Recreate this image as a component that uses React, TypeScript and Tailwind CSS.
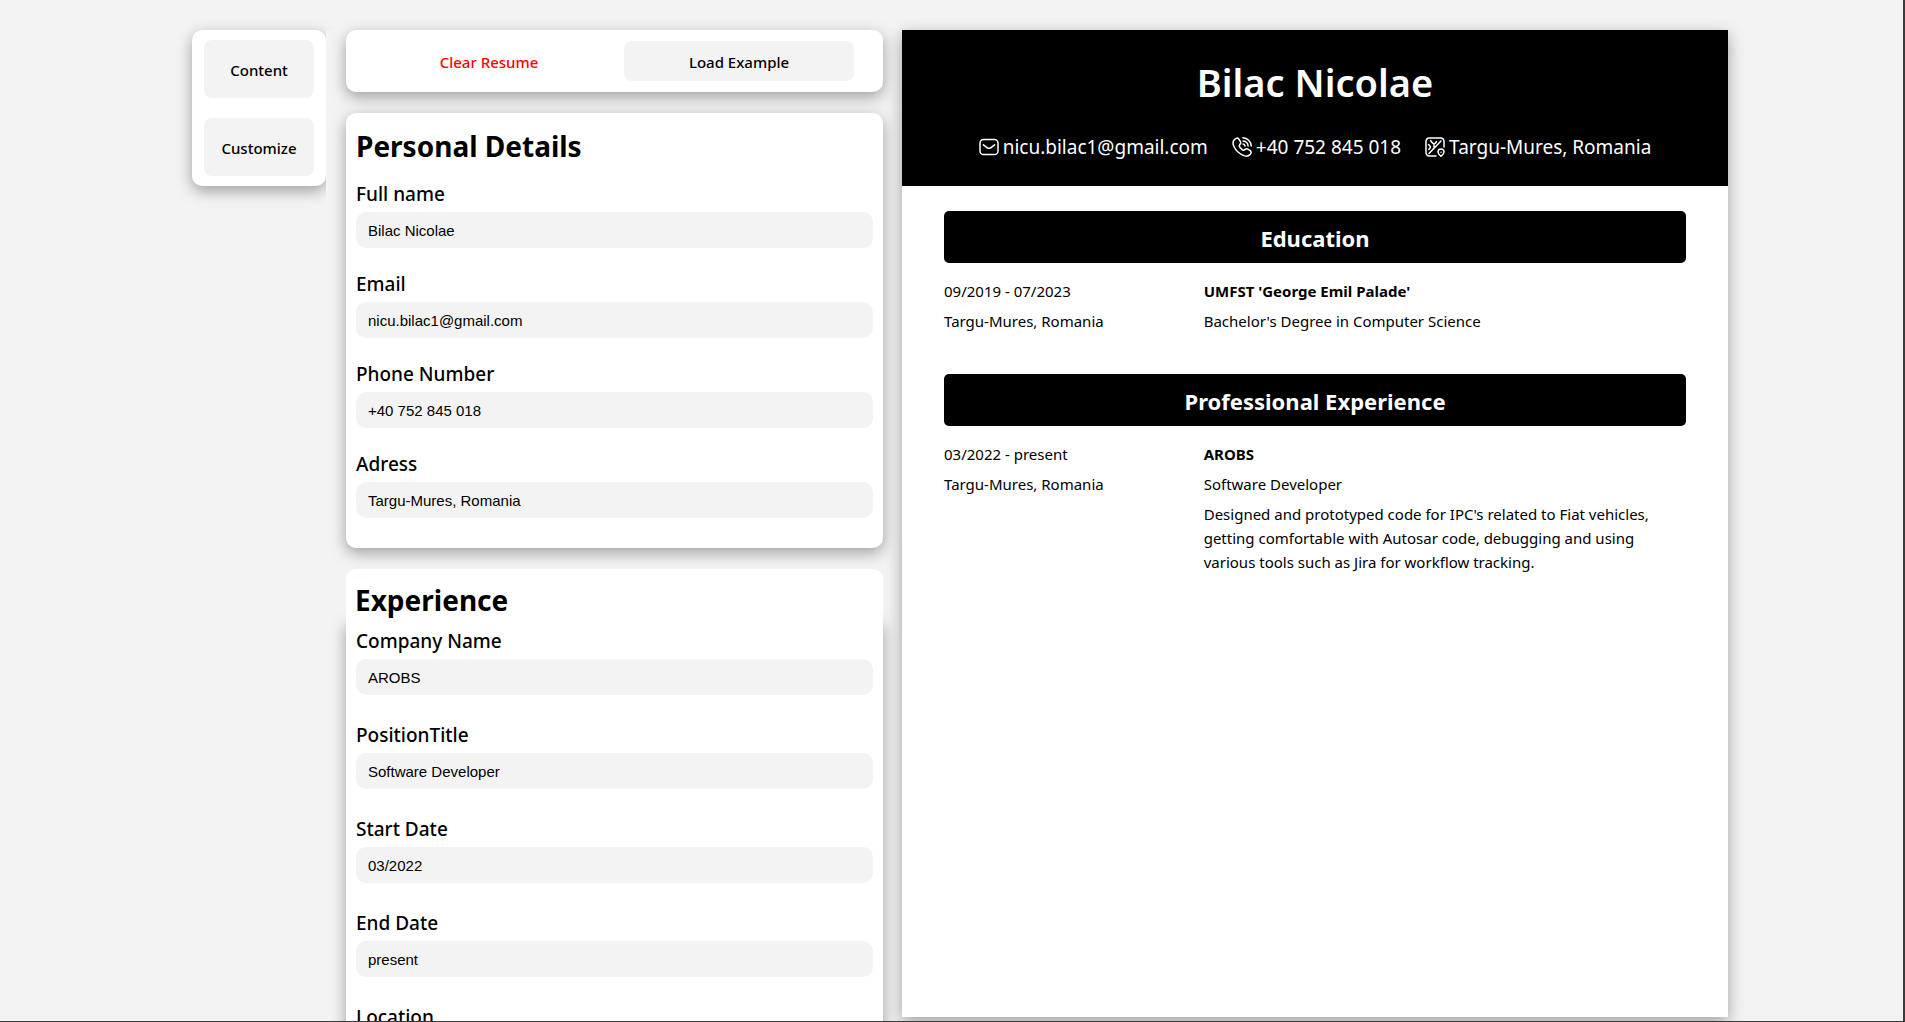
import { useState } from 'react';

type Field = { label: string; value: string };

const personal: Field[] = [
  { label: 'Full name', value: 'Bilac Nicolae' },
  { label: 'Email', value: 'nicu.bilac1@gmail.com' },
  { label: 'Phone Number', value: '+40 752 845 018' },
  { label: 'Adress', value: 'Targu-Mures, Romania' },
];

const experience: Field[] = [
  { label: 'Company Name', value: 'AROBS' },
  { label: 'PositionTitle', value: 'Software Developer' },
  { label: 'Start Date', value: '03/2022' },
  { label: 'End Date', value: 'present' },
  { label: 'Location', value: 'Targu-Mures, Romania' },
];

function TextField({ label, value }: Field) {
  const [text, setText] = useState(value);
  return (
    <label className="flex flex-col gap-1">
      <span className="text-[19px] leading-7 font-medium">{label}</span>
      <input
        type="text"
        value={text}
        onChange={(e) => setText(e.target.value)}
        className="h-9 w-full rounded-[10px] bg-[#f3f3f3] px-3 font-['Liberation_Sans',sans-serif] text-[15px] outline-none"
      />
    </label>
  );
}

function MailIcon() {
  return (
    <svg viewBox="0 0 20 20" className="size-5" fill="none" stroke="currentColor" strokeWidth="1.5" strokeLinecap="round" strokeLinejoin="round" aria-hidden="true">
      <rect x="1" y="2.5" width="18" height="15" rx="3.6" />
      <path d="M4.400 7.800 8 10.600q2 1.500 4 0l3.600-2.800" />
    </svg>
  );
}

function PhoneIcon() {
  return (
    <svg viewBox="0 0 20 20" className="size-5" fill="none" stroke="currentColor" strokeWidth="1.5" strokeLinecap="round" strokeLinejoin="round" aria-hidden="true">
      <path d="M2.300 2.700C3.500 1.100 5.500.4 6.700 2l1.600 2.400c.8 1.300.3 2.200-.4 3-.9 1-.8 1.800.1 3l1.900 2c1.100 1 1.900 1.100 2.900.2.900-.8 1.800-1.300 3-.5l2.400 1.600c1.500 1.100.9 3-.5 4.200-1.700 1.600-4.200 1.600-7 .2C6.800 16.300 3.700 13.200 1.900 9.500.6 6.800.8 4.400 2.300 2.700Z" />
      <path d="M11 .8c4.400.2 8 3.800 8.200 8.200M11 3.900c2.800.2 4.900 2.300 5.100 5.100M11 7c1.200.1 1.900.8 2 2" />
    </svg>
  );
}

function MapIcon() {
  return (
    <svg viewBox="0 0 20 20" className="size-5" fill="none" stroke="currentColor" strokeWidth="1.5" strokeLinecap="round" strokeLinejoin="round" aria-hidden="true">
      <path d="M11 19H4.500A3.600 3.600 0 0 1 1 15.500v-11A3.600 3.600 0 0 1 4.500 1h11A3.600 3.600 0 0 1 19 4.500V10" />
      <path d="m4 16.500 12-12.500M5.500 3.500l2 2.500q1.500 1.300 3 0l1-1.500M9 7v3M3.500 7.500l1.500 1.500q1 1 0 2l-1.200 1.500" />
      <path d="M16 19.300c-1.800-1.400-3-2.700-3-4.200a3 3 0 0 1 6 0c0 1.500-1.200 2.800-3 4.200Z" />
      <path d="M16 15.200h.01" />
    </svg>
  );
}

function SectionTitle({ children }: { children: string }) {
  return (
    <h2 className="flex h-13 items-center justify-center rounded-[5px] bg-black pt-0.5 text-[22px] font-bold text-white">
      {children}
    </h2>
  );
}

export default function App() {
  return (
    <div className="h-screen overflow-hidden border-r-2 border-b border-[#3a3a3a] bg-[#f3f3f3] font-['Noto_Sans',sans-serif] text-black">
      <div className="grid h-full grid-cols-[134px_minmax(0,557fr)_minmax(0,845fr)] items-start overflow-y-auto pt-[30px] pr-[175px] pl-48 [scrollbar-width:none]">
        <nav className="flex flex-col gap-5 rounded-[10px] bg-white px-3 py-2.5 shadow-[0_5px_15px_rgba(0,0,0,0.35)]">
          <button type="button" className="h-[58px] rounded-[8px] bg-[#f3f3f3] pt-0.5 text-[15px] font-medium">Content</button>
          <button type="button" className="h-[58px] rounded-[8px] bg-[#f3f3f3] pt-0.5 text-[15px] font-medium">Customize</button>
        </nav>

        <main className="relative flex flex-col gap-[21px] bg-[#f3f3f3] pl-5">
          <div className="grid h-[62px] grid-cols-2 items-center gap-5 rounded-[10px] bg-white pr-[29px] pl-7 shadow-[0_5px_15px_rgba(0,0,0,0.35)]">
            <button type="button" className="h-10 rounded-[8px] pt-0.5 text-[15px] font-medium text-[#ff0000]">Clear Resume</button>
            <button type="button" className="h-10 rounded-[8px] bg-[#f3f3f3] pt-0.5 text-[15px] font-medium">Load Example</button>
          </div>

          <section className="rounded-[10px] bg-white px-2.5 pt-3 pb-[30px] shadow-[0_5px_15px_rgba(0,0,0,0.35)]">
            <h2 className="mb-[13px] text-[28px] leading-[42px] font-bold">Personal Details</h2>
            <form className="flex flex-col gap-[22px]">
              {personal.map((f) => <TextField key={f.label} {...f} />)}
            </form>
          </section>

          <section>
            <h2 className="relative z-10 rounded-t-[10px] bg-white px-[9px] pt-2.5 text-[28px] leading-[42px] font-bold">Experience</h2>
            <form className="flex flex-col gap-[26px] rounded-b-[10px] bg-white px-2.5 pt-1.5 pb-[30px] shadow-[0_5px_15px_rgba(0,0,0,0.35)]">
              {experience.map((f) => <TextField key={f.label} {...f} />)}
            </form>
          </section>
        </main>

        <article className="relative ml-[19px] min-h-[987px] bg-white shadow-[0_5px_15px_rgba(0,0,0,0.35)]">
          <header className="flex h-39 flex-col items-center bg-black pt-6 text-white">
            <h1 className="text-[38px] leading-[56px] font-semibold">Bilac Nicolae</h1>
            <ul className="mt-[21px] flex gap-6 text-[19px] leading-8">
              <li className="flex items-center gap-1"><MailIcon />nicu.bilac1@gmail.com</li>
              <li className="flex items-center gap-1"><PhoneIcon />+40 752 845 018</li>
              <li className="flex items-center gap-1"><MapIcon />Targu-Mures, Romania</li>
            </ul>
          </header>
          <div className="flex flex-col gap-[41px] px-[42px] pt-[25px] text-[15px] leading-6">
            <section>
              <SectionTitle>Education</SectionTitle>
              <div className="mt-4 grid grid-cols-[35fr_65fr]">
                <div className="flex flex-col gap-1.5"><p>09/2019 - 07/2023</p><p>Targu-Mures, Romania</p></div>
                <div className="flex flex-col gap-1.5"><h3 className="font-bold">UMFST 'George Emil Palade'</h3><p>Bachelor's Degree in Computer Science</p></div>
              </div>
            </section>
            <section>
              <SectionTitle>Professional Experience</SectionTitle>
              <div className="mt-4 grid grid-cols-[35fr_65fr]">
                <div className="flex flex-col gap-1.5"><p>03/2022 - present</p><p>Targu-Mures, Romania</p></div>
                <div className="flex flex-col gap-1.5">
                  <h3 className="font-bold">AROBS</h3>
                  <p>Software Developer</p>
                  <p>Designed and prototyped code for IPC's related to Fiat vehicles, getting comfortable with Autosar code, debugging and using various tools such as Jira for workflow tracking.</p>
                </div>
              </div>
            </section>
          </div>
        </article>
      </div>
    </div>
  );
}
